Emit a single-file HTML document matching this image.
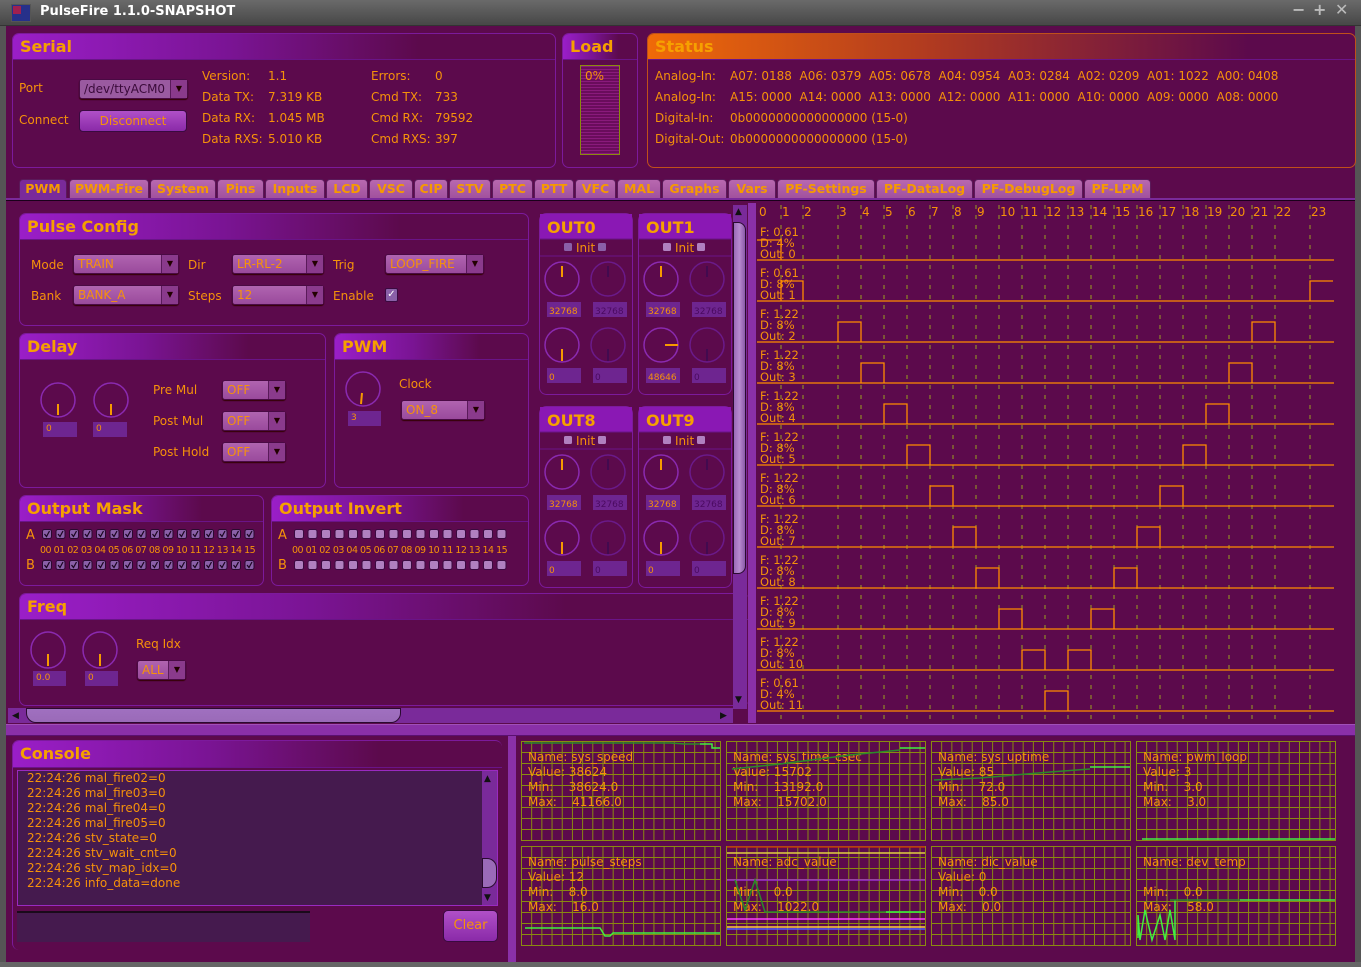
<!DOCTYPE html>
<html><head><meta charset="utf-8"><style>
*{margin:0;padding:0;box-sizing:border-box}
body{width:1361px;height:967px;overflow:hidden;background:#5c0a4c;font-family:"DejaVu Sans","Liberation Sans",sans-serif;color:#f6920a;font-size:12px;position:relative}
.a{position:absolute}
.t{position:absolute;white-space:pre;line-height:14px}
.p{position:absolute;border:1px solid #7c1a9c;border-radius:7px;overflow:hidden}
.h{position:absolute;left:0;right:0;top:0;height:26px;background:linear-gradient(90deg,#9a1ec8 0%,#7a1494 40%,rgba(92,10,76,0) 75%);font-weight:bold;font-size:16px;padding:3px 0 0 7px;color:#f6a000;border-bottom:1px solid #6a1488}
.cb{position:absolute;height:20px;border-radius:3px;background:linear-gradient(#b064b0,#9a4a9c);border:1px solid #4a0a44;color:#f6920a;font-size:12px;padding:2px 0 0 4px;line-height:14px;box-shadow:0 1px 1px #300}
.cb:after{content:"▼";position:absolute;right:0;top:0;width:16px;height:18px;background:#8a3a8c;color:#200;font-size:8px;text-align:center;line-height:18px;border-left:1px solid #5a1a5a}
.vb{position:absolute;height:15px;background:#6e2590;font-size:9px;padding:2px 0 0 3px;line-height:11px}
.tab{position:absolute;top:179px;height:20px;background:linear-gradient(#b868b0,#a0509c);border:1px solid #5a1a5a;border-bottom:none;border-radius:4px 4px 0 0;font-weight:bold;font-size:12.5px;text-align:center;line-height:18px;color:#f69a00}
.g{position:absolute;border:1px solid #8a8a10;background-color:#5c0a4c;background-image:linear-gradient(90deg,#8a8a10 1px,transparent 1px),linear-gradient(#8a8a10 1px,transparent 1px);background-size:10.2px 100%,100% 11px;background-position:-1px 0,0 -1px}
.g .t{color:#f6920a;line-height:15px;font-size:12px}
</style></head><body>
<div class="a" style="left:0;top:0;width:1361px;height:26px;background:linear-gradient(#6a6a6a,#474747);border-bottom:1px solid #333"></div>
<div class="a" style="left:11px;top:4px;width:20px;height:18px;background:#26308a;border:1px solid #555"></div>
<div class="a" style="left:13px;top:6px;width:8px;height:8px;background:#a02050"></div>
<div class="t" style="left:40px;top:5px;color:#fff;font-weight:bold;font-size:13px">PulseFire 1.1.0-SNAPSHOT</div>
<div class="t" style="left:1292px;top:3px;color:#bbb;font-weight:bold;font-size:16px">−</div>
<div class="t" style="left:1313px;top:3px;color:#bbb;font-weight:bold;font-size:16px">+</div>
<div class="t" style="left:1335px;top:3px;color:#bbb;font-weight:bold;font-size:16px">✕</div>
<div class="a" style="left:0;top:26px;width:6px;height:941px;background:#555"></div>
<div class="a" style="left:1355px;top:26px;width:6px;height:941px;background:#555"></div>
<div class="a" style="left:0;top:962px;width:1361px;height:5px;background:#666"></div>

<div class="p" style="left:12px;top:33px;width:544px;height:135px"><div class="h">Serial</div></div>
<div class="t" style="left:19px;top:81px">Port</div>
<div class="cb" style="left:79px;top:79px;width:109px;background:#9a5aa0;color:#3a0a3a">/dev/ttyACM0</div>
<div class="t" style="left:19px;top:113px">Connect</div>
<div class="a" style="left:79px;top:110px;width:108px;height:22px;border-radius:4px;background:linear-gradient(#b050c8,#8a2aa8);border:1px solid #3a0a40;text-align:center;line-height:20px">Disconnect</div>
<div class="t" style="left:202px;top:66px;line-height:21px">Version:
Data TX:
Data RX:
Data RXS:</div>
<div class="t" style="left:268px;top:66px;line-height:21px">1.1
7.319 KB
1.045 MB
5.010 KB</div>
<div class="t" style="left:371px;top:66px;line-height:21px">Errors:
Cmd TX:
Cmd RX:
Cmd RXS:</div>
<div class="t" style="left:435px;top:66px;line-height:21px">0
733
79592
397</div>

<div class="p" style="left:562px;top:33px;width:76px;height:135px"><div class="h">Load</div></div>
<div class="a" style="left:580px;top:65px;width:40px;height:90px;border:1px solid #8a8a10;background:repeating-linear-gradient(#8a1a7c 0 1px,#6a0c5c 1px 3px)"></div>
<div class="t" style="left:585px;top:69px">0%</div>

<div class="p" style="left:647px;top:33px;width:709px;height:135px;border-color:#c0501a"><div class="h" style="background:linear-gradient(90deg,#f06a08 0%,#b03a20 40%,rgba(92,10,76,0) 85%)">Status</div></div>
<div class="t" style="left:655px;top:66px;line-height:21px">Analog-In:
Analog-In:
Digital-In:
Digital-Out:</div>
<div class="t" style="left:730px;top:66px;line-height:21px">A07: 0188  A06: 0379  A05: 0678  A04: 0954  A03: 0284  A02: 0209  A01: 1022  A00: 0408
A15: 0000  A14: 0000  A13: 0000  A12: 0000  A11: 0000  A10: 0000  A09: 0000  A08: 0000
0b0000000000000000 (15-0)
0b0000000000000000 (15-0)</div>

<div class="tab" style="left:19px;width:48px;background:#7a2a9a">PWM</div>
<div class="tab" style="left:69px;width:80px">PWM-Fire</div>
<div class="tab" style="left:150px;width:66px">System</div>
<div class="tab" style="left:217px;width:47px">Pins</div>
<div class="tab" style="left:265px;width:60px">Inputs</div>
<div class="tab" style="left:326px;width:42px">LCD</div>
<div class="tab" style="left:369px;width:44px">VSC</div>
<div class="tab" style="left:414px;width:34px">CIP</div>
<div class="tab" style="left:449px;width:42px">STV</div>
<div class="tab" style="left:492px;width:41px">PTC</div>
<div class="tab" style="left:534px;width:40px">PTT</div>
<div class="tab" style="left:575px;width:41px">VFC</div>
<div class="tab" style="left:617px;width:44px">MAL</div>
<div class="tab" style="left:662px;width:65px">Graphs</div>
<div class="tab" style="left:728px;width:48px">Vars</div>
<div class="tab" style="left:777px;width:98px">PF-Settings</div>
<div class="tab" style="left:876px;width:97px">PF-DataLog</div>
<div class="tab" style="left:974px;width:109px">PF-DebugLog</div>
<div class="tab" style="left:1084px;width:67px">PF-LPM</div>
<div class="a" style="left:6px;top:198px;width:1349px;height:3px;background:#7a2a9a;border-bottom:1px solid #1a001a"></div>

<div class="p" style="left:19px;top:213px;width:510px;height:113px"><div class="h">Pulse Config</div></div>
<div class="t" style="left:31px;top:258px">Mode</div>
<div class="cb" style="left:73px;top:254px;width:106px">TRAIN</div>
<div class="t" style="left:188px;top:258px">Dir</div>
<div class="cb" style="left:232px;top:254px;width:92px">LR-RL-2</div>
<div class="t" style="left:333px;top:258px">Trig</div>
<div class="cb" style="left:385px;top:254px;width:99px">LOOP_FIRE</div>
<div class="t" style="left:31px;top:289px">Bank</div>
<div class="cb" style="left:73px;top:285px;width:106px">BANK_A</div>
<div class="t" style="left:188px;top:289px">Steps</div>
<div class="cb" style="left:232px;top:285px;width:92px">12</div>
<div class="t" style="left:333px;top:289px">Enable</div>
<div class="a" style="left:385px;top:288px;width:13px;height:14px;background:#8a60a8;border:1px solid #3a0a40;border-radius:2px;color:#fff;font-size:10px;line-height:12px;text-align:center">✓</div>

<div class="p" style="left:19px;top:333px;width:307px;height:155px"><div class="h">Delay</div></div>
<svg class="a" style="left:40px;top:382px" width="36" height="36"><circle cx="18" cy="18" r="17" fill="none" stroke="#8a2ab0" stroke-width="1.5"/><line x1="18" y1="22" x2="18" y2="33" stroke="#f69a00" stroke-width="2"/></svg>
<svg class="a" style="left:93px;top:382px" width="36" height="36"><circle cx="18" cy="18" r="17" fill="none" stroke="#8a2ab0" stroke-width="1.5"/><line x1="18" y1="22" x2="18" y2="33" stroke="#f69a00" stroke-width="2"/></svg>
<div class="vb" style="left:43px;top:422px;width:34px">0</div>
<div class="vb" style="left:93px;top:422px;width:34px">0</div>
<div class="t" style="left:153px;top:383px">Pre Mul</div>
<div class="t" style="left:153px;top:414px">Post Mul</div>
<div class="t" style="left:153px;top:445px">Post Hold</div>
<div class="cb" style="left:222px;top:380px;width:64px">OFF</div>
<div class="cb" style="left:222px;top:411px;width:64px">OFF</div>
<div class="cb" style="left:222px;top:442px;width:64px">OFF</div>

<div class="p" style="left:334px;top:333px;width:195px;height:155px"><div class="h">PWM</div></div>
<svg class="a" style="left:345px;top:371px" width="36" height="36"><circle cx="18" cy="18" r="17" fill="none" stroke="#8a2ab0" stroke-width="1.5"/><line x1="17" y1="22" x2="16" y2="33" stroke="#f69a00" stroke-width="2"/></svg>
<div class="vb" style="left:348px;top:411px;width:33px">3</div>
<div class="t" style="left:399px;top:377px">Clock</div>
<div class="cb" style="left:401px;top:400px;width:84px">ON_8</div>

<div class="p" style="left:19px;top:495px;width:245px;height:91px"><div class="h">Output Mask</div></div>
<div class="p" style="left:271px;top:495px;width:258px;height:91px"><div class="h">Output Invert</div></div>
<div class="t" style="left:26px;top:529px;font-size:13px">A</div>
<div class="t" style="left:26px;top:559px;font-size:13px">B</div>
<div class="t" style="left:278px;top:529px;font-size:13px">A</div>
<div class="t" style="left:278px;top:559px;font-size:13px">B</div>
<div class="t" style="left:40px;top:544px;font-size:9.5px;letter-spacing:-0.5px">00 01 02 03 04 05 06 07 08 09 10 11 12 13 14 15</div>
<div class="t" style="left:292px;top:544px;font-size:9.5px;letter-spacing:-0.5px">00 01 02 03 04 05 06 07 08 09 10 11 12 13 14 15</div>
<svg class="a" style="left:40px;top:529px" width="225" height="45">
<defs><g id="c1"><rect x="0.5" y="0.5" width="9" height="9" rx="2" fill="#8a60a8" stroke="#2a0a30"/><path d="M2.5 5 L4.5 7.5 L7.5 2" stroke="#1a0520" fill="none" stroke-width="1.2"/></g></defs>
<use href="#c1" x="2"/><use href="#c1" x="15.5"/><use href="#c1" x="29"/><use href="#c1" x="42.5"/><use href="#c1" x="56"/><use href="#c1" x="69.5"/><use href="#c1" x="83"/><use href="#c1" x="96.5"/><use href="#c1" x="110"/><use href="#c1" x="123.5"/><use href="#c1" x="137"/><use href="#c1" x="150.5"/><use href="#c1" x="164"/><use href="#c1" x="177.5"/><use href="#c1" x="191"/><use href="#c1" x="204.5"/>
<g transform="translate(0,31)"><use href="#c1" x="2"/><use href="#c1" x="15.5"/><use href="#c1" x="29"/><use href="#c1" x="42.5"/><use href="#c1" x="56"/><use href="#c1" x="69.5"/><use href="#c1" x="83"/><use href="#c1" x="96.5"/><use href="#c1" x="110"/><use href="#c1" x="123.5"/><use href="#c1" x="137"/><use href="#c1" x="150.5"/><use href="#c1" x="164"/><use href="#c1" x="177.5"/><use href="#c1" x="191"/><use href="#c1" x="204.5"/></g>
</svg>
<svg class="a" style="left:292px;top:529px" width="225" height="45">
<defs><rect id="c0" x="0.5" y="0.5" width="9" height="9" rx="2" fill="#b080c0" stroke="#3a0a40"/></defs>
<use href="#c0" x="2"/><use href="#c0" x="15.5"/><use href="#c0" x="29"/><use href="#c0" x="42.5"/><use href="#c0" x="56"/><use href="#c0" x="69.5"/><use href="#c0" x="83"/><use href="#c0" x="96.5"/><use href="#c0" x="110"/><use href="#c0" x="123.5"/><use href="#c0" x="137"/><use href="#c0" x="150.5"/><use href="#c0" x="164"/><use href="#c0" x="177.5"/><use href="#c0" x="191"/><use href="#c0" x="204.5"/>
<g transform="translate(0,31)"><use href="#c0" x="2"/><use href="#c0" x="15.5"/><use href="#c0" x="29"/><use href="#c0" x="42.5"/><use href="#c0" x="56"/><use href="#c0" x="69.5"/><use href="#c0" x="83"/><use href="#c0" x="96.5"/><use href="#c0" x="110"/><use href="#c0" x="123.5"/><use href="#c0" x="137"/><use href="#c0" x="150.5"/><use href="#c0" x="164"/><use href="#c0" x="177.5"/><use href="#c0" x="191"/><use href="#c0" x="204.5"/></g>
</svg>

<div class="p" style="left:19px;top:593px;width:730px;height:113px;border-right:none"><div class="h">Freq</div></div>
<svg class="a" style="left:30px;top:631px" width="36" height="38"><ellipse cx="18" cy="19" rx="17" ry="18" fill="none" stroke="#8a2ab0" stroke-width="1.5"/><line x1="18" y1="23" x2="18" y2="35" stroke="#f69a00" stroke-width="2"/></svg>
<svg class="a" style="left:82px;top:631px" width="36" height="38"><ellipse cx="18" cy="19" rx="17" ry="18" fill="none" stroke="#8a2ab0" stroke-width="1.5"/><line x1="18" y1="23" x2="18" y2="35" stroke="#f69a00" stroke-width="2"/></svg>
<div class="vb" style="left:33px;top:671px;width:33px">0.0</div>
<div class="vb" style="left:85px;top:671px;width:33px">0</div>
<div class="t" style="left:136px;top:637px">Req Idx</div>
<div class="cb" style="left:137px;top:660px;width:49px">ALL</div>

<svg class="a" style="left:539px;top:213px" width="195" height="380" font-family="DejaVu Sans, sans-serif">
<defs>
<g id="kn"><circle cx="17" cy="17" r="17" fill="none" stroke="#8a2ab0" stroke-width="1.5"/></g>
<g id="kd"><circle cx="17" cy="17" r="17" fill="none" stroke="#6a1a8a" stroke-width="1.5"/></g>
</defs>
<rect x="0.5" y="0.5" width="93" height="181" rx="7" fill="none" stroke="#7c1a9c"/>
<rect x="1" y="1" width="92" height="25" fill="#8a18b4"/>
<text x="8" y="20" font-size="16" font-weight="bold" fill="#f6a000">OUT0</text>
<line x1="1" y1="26" x2="93" y2="26" stroke="#6a1488"/><line x1="1" y1="43" x2="93" y2="43" stroke="#6a1488"/>
<rect x="25" y="30" width="8" height="8" rx="1.5" fill="#8a60a8"/><text x="37" y="39" font-size="12" fill="#f6920a">Init</text><rect x="59" y="30" width="8" height="8" rx="1.5" fill="#8a60a8"/>
<use href="#kn" x="6" y="49"/><line x1="23" y1="53" x2="23" y2="64" stroke="#f69a00" stroke-width="2"/>
<use href="#kd" x="52" y="49"/><line x1="69" y1="53" x2="69" y2="64" stroke="#3a0a50" stroke-width="1.5"/>
<rect x="8" y="89" width="34" height="15" fill="#6e2590"/><text x="10" y="101" font-size="9" fill="#f6920a">32768</text>
<rect x="54" y="89" width="34" height="15" fill="#6e2590"/><text x="56" y="101" font-size="9" fill="#4a0a60">32768</text>
<use href="#kn" x="6" y="115"/><line x1="23" y1="136" x2="23" y2="148" stroke="#f69a00" stroke-width="2"/>
<use href="#kd" x="52" y="115"/><line x1="69" y1="136" x2="69" y2="148" stroke="#3a0a50" stroke-width="1.5"/>
<rect x="8" y="155" width="34" height="15" fill="#6e2590"/><text x="10" y="167" font-size="9" fill="#f6920a">0</text>
<rect x="54" y="155" width="34" height="15" fill="#6e2590"/><text x="56" y="167" font-size="9" fill="#4a0a60">0</text>
<g transform="translate(99,0)">
<rect x="0.5" y="0.5" width="93" height="181" rx="7" fill="none" stroke="#7c1a9c"/>
<rect x="1" y="1" width="92" height="25" fill="#8a18b4"/>
<text x="8" y="20" font-size="16" font-weight="bold" fill="#f6a000">OUT1</text>
<line x1="1" y1="26" x2="93" y2="26" stroke="#6a1488"/><line x1="1" y1="43" x2="93" y2="43" stroke="#6a1488"/>
<rect x="25" y="30" width="8" height="8" rx="1.5" fill="#b080c0"/><text x="37" y="39" font-size="12" fill="#f6920a">Init</text><rect x="59" y="30" width="8" height="8" rx="1.5" fill="#b080c0"/>
<use href="#kn" x="6" y="49"/><line x1="23" y1="53" x2="23" y2="64" stroke="#f69a00" stroke-width="2"/>
<use href="#kd" x="52" y="49"/><line x1="69" y1="53" x2="69" y2="64" stroke="#3a0a50" stroke-width="1.5"/>
<rect x="8" y="89" width="34" height="15" fill="#6e2590"/><text x="10" y="101" font-size="9" fill="#f6920a">32768</text>
<rect x="54" y="89" width="34" height="15" fill="#6e2590"/><text x="56" y="101" font-size="9" fill="#4a0a60">32768</text>
<use href="#kn" x="6" y="115"/><line x1="27" y1="132" x2="40" y2="132" stroke="#f69a00" stroke-width="2"/>
<use href="#kd" x="52" y="115"/><line x1="69" y1="136" x2="69" y2="148" stroke="#3a0a50" stroke-width="1.5"/>
<rect x="8" y="155" width="34" height="15" fill="#6e2590"/><text x="10" y="167" font-size="9" fill="#f6920a">48646</text>
<rect x="54" y="155" width="34" height="15" fill="#6e2590"/><text x="56" y="167" font-size="9" fill="#4a0a60">0</text>
</g>
<g transform="translate(0,193)">
<rect x="0.5" y="0.5" width="93" height="181" rx="7" fill="none" stroke="#7c1a9c"/>
<rect x="1" y="1" width="92" height="25" fill="#8a18b4"/>
<text x="8" y="20" font-size="16" font-weight="bold" fill="#f6a000">OUT8</text>
<line x1="1" y1="26" x2="93" y2="26" stroke="#6a1488"/><line x1="1" y1="43" x2="93" y2="43" stroke="#6a1488"/>
<rect x="25" y="30" width="8" height="8" rx="1.5" fill="#b080c0"/><text x="37" y="39" font-size="12" fill="#f6920a">Init</text><rect x="59" y="30" width="8" height="8" rx="1.5" fill="#b080c0"/>
<use href="#kn" x="6" y="49"/><line x1="23" y1="53" x2="23" y2="64" stroke="#f69a00" stroke-width="2"/>
<use href="#kd" x="52" y="49"/><line x1="69" y1="53" x2="69" y2="64" stroke="#3a0a50" stroke-width="1.5"/>
<rect x="8" y="89" width="34" height="15" fill="#6e2590"/><text x="10" y="101" font-size="9" fill="#f6920a">32768</text>
<rect x="54" y="89" width="34" height="15" fill="#6e2590"/><text x="56" y="101" font-size="9" fill="#4a0a60">32768</text>
<use href="#kn" x="6" y="115"/><line x1="23" y1="136" x2="23" y2="148" stroke="#f69a00" stroke-width="2"/>
<use href="#kd" x="52" y="115"/><line x1="69" y1="136" x2="69" y2="148" stroke="#3a0a50" stroke-width="1.5"/>
<rect x="8" y="155" width="34" height="15" fill="#6e2590"/><text x="10" y="167" font-size="9" fill="#f6920a">0</text>
<rect x="54" y="155" width="34" height="15" fill="#6e2590"/><text x="56" y="167" font-size="9" fill="#4a0a60">0</text>
</g>
<g transform="translate(99,193)">
<rect x="0.5" y="0.5" width="93" height="181" rx="7" fill="none" stroke="#7c1a9c"/>
<rect x="1" y="1" width="92" height="25" fill="#8a18b4"/>
<text x="8" y="20" font-size="16" font-weight="bold" fill="#f6a000">OUT9</text>
<line x1="1" y1="26" x2="93" y2="26" stroke="#6a1488"/><line x1="1" y1="43" x2="93" y2="43" stroke="#6a1488"/>
<rect x="25" y="30" width="8" height="8" rx="1.5" fill="#b080c0"/><text x="37" y="39" font-size="12" fill="#f6920a">Init</text><rect x="59" y="30" width="8" height="8" rx="1.5" fill="#b080c0"/>
<use href="#kn" x="6" y="49"/><line x1="23" y1="53" x2="23" y2="64" stroke="#f69a00" stroke-width="2"/>
<use href="#kd" x="52" y="49"/><line x1="69" y1="53" x2="69" y2="64" stroke="#3a0a50" stroke-width="1.5"/>
<rect x="8" y="89" width="34" height="15" fill="#6e2590"/><text x="10" y="101" font-size="9" fill="#f6920a">32768</text>
<rect x="54" y="89" width="34" height="15" fill="#6e2590"/><text x="56" y="101" font-size="9" fill="#4a0a60">32768</text>
<use href="#kn" x="6" y="115"/><line x1="23" y1="136" x2="23" y2="148" stroke="#f69a00" stroke-width="2"/>
<use href="#kd" x="52" y="115"/><line x1="69" y1="136" x2="69" y2="148" stroke="#3a0a50" stroke-width="1.5"/>
<rect x="8" y="155" width="34" height="15" fill="#6e2590"/><text x="10" y="167" font-size="9" fill="#f6920a">0</text>
<rect x="54" y="155" width="34" height="15" fill="#6e2590"/><text x="56" y="167" font-size="9" fill="#4a0a60">0</text>
</g>
</svg>

<div class="a" style="left:733px;top:205px;width:14px;height:504px;background:#7a2a9a"></div>
<div class="a" style="left:733px;top:222px;width:13px;height:352px;border-radius:0 8px 8px 0;background:linear-gradient(90deg,#9a6ab8,#b88ad0,#8a5aa8);border:1px solid #2a0a30"></div>
<div class="t" style="left:735px;top:205px;font-size:9px;color:#111">▲</div>
<div class="t" style="left:735px;top:693px;font-size:9px;color:#111">▼</div>
<div class="a" style="left:8px;top:708px;width:725px;height:15px;background:#7a2a9a"></div>
<div class="a" style="left:26px;top:708px;width:375px;height:15px;border-radius:0 0 10px 10px;background:linear-gradient(#a070c0,#9a6ab8);border:1px solid #2a0a30"></div>
<div class="t" style="left:12px;top:709px;font-size:9px;color:#111">◀</div>
<div class="t" style="left:720px;top:709px;font-size:9px;color:#111">▶</div>
<div class="a" style="left:748px;top:203px;width:8px;height:520px;background:#8a30a8"></div>
<div class="t" style="left:39px;top:723px;font-size:7px;color:#111">▲▼</div>
<div class="a" style="left:6px;top:724px;width:1349px;height:12px;background:#8a30a8;border-top:1px solid #a050b8;border-bottom:1px solid #5a1070"></div>

<svg class="a" style="left:756px;top:203px" width="599" height="520" font-family="DejaVu Sans, sans-serif" font-size="12">
<g stroke="#9aa020" stroke-dasharray="4,6" stroke-width="1">
<line x1="25" y1="2" x2="25" y2="520"/><line x1="47" y1="2" x2="47" y2="520"/><line x1="82" y1="2" x2="82" y2="520"/><line x1="105" y1="2" x2="105" y2="520"/><line x1="128" y1="2" x2="128" y2="520"/><line x1="151" y1="2" x2="151" y2="520"/><line x1="174" y1="2" x2="174" y2="520"/><line x1="197" y1="2" x2="197" y2="520"/><line x1="220" y1="2" x2="220" y2="520"/><line x1="243" y1="2" x2="243" y2="520"/><line x1="266" y1="2" x2="266" y2="520"/><line x1="289" y1="2" x2="289" y2="520"/><line x1="312" y1="2" x2="312" y2="520"/><line x1="335" y1="2" x2="335" y2="520"/><line x1="358" y1="2" x2="358" y2="520"/><line x1="381" y1="2" x2="381" y2="520"/><line x1="404" y1="2" x2="404" y2="520"/><line x1="427" y1="2" x2="427" y2="520"/><line x1="450" y1="2" x2="450" y2="520"/><line x1="473" y1="2" x2="473" y2="520"/><line x1="496" y1="2" x2="496" y2="520"/><line x1="519" y1="2" x2="519" y2="520"/><line x1="554" y1="2" x2="554" y2="520"/>
</g>
<g fill="#f6920a">
<text x="3" y="13">0</text><text x="26" y="13">1</text><text x="48" y="13">2</text><text x="83" y="13">3</text><text x="106" y="13">4</text><text x="129" y="13">5</text><text x="152" y="13">6</text><text x="175" y="13">7</text><text x="198" y="13">8</text><text x="221" y="13">9</text><text x="244" y="13">10</text><text x="267" y="13">11</text><text x="290" y="13">12</text><text x="313" y="13">13</text><text x="336" y="13">14</text><text x="359" y="13">15</text><text x="382" y="13">16</text><text x="405" y="13">17</text><text x="428" y="13">18</text><text x="451" y="13">19</text><text x="474" y="13">20</text><text x="497" y="13">21</text><text x="520" y="13">22</text><text x="555" y="13">23</text>
<g font-size="11.5">
<text x="4" y="33">F: 0.61</text><text x="4" y="44">D: 4%</text><text x="4" y="55">Out: 0</text>
<text x="4" y="74">F: 0.61</text><text x="4" y="85">D: 8%</text><text x="4" y="96">Out: 1</text>
<text x="4" y="115">F: 1.22</text><text x="4" y="126">D: 8%</text><text x="4" y="137">Out: 2</text>
<text x="4" y="156">F: 1.22</text><text x="4" y="167">D: 8%</text><text x="4" y="178">Out: 3</text>
<text x="4" y="197">F: 1.22</text><text x="4" y="208">D: 8%</text><text x="4" y="219">Out: 4</text>
<text x="4" y="238">F: 1.22</text><text x="4" y="249">D: 8%</text><text x="4" y="260">Out: 5</text>
<text x="4" y="279">F: 1.22</text><text x="4" y="290">D: 8%</text><text x="4" y="301">Out: 6</text>
<text x="4" y="320">F: 1.22</text><text x="4" y="331">D: 8%</text><text x="4" y="342">Out: 7</text>
<text x="4" y="361">F: 1.22</text><text x="4" y="372">D: 8%</text><text x="4" y="383">Out: 8</text>
<text x="4" y="402">F: 1.22</text><text x="4" y="413">D: 8%</text><text x="4" y="424">Out: 9</text>
<text x="4" y="443">F: 1.22</text><text x="4" y="454">D: 8%</text><text x="4" y="465">Out: 10</text>
<text x="4" y="484">F: 0.61</text><text x="4" y="495">D: 4%</text><text x="4" y="506">Out: 11</text>
</g></g>
<g stroke="#ff8c00" stroke-width="1.3" fill="none">
<path d="M1 57H578"/><path d="M1 98H578"/><path d="M1 139H578"/><path d="M1 180H578"/><path d="M1 221H578"/><path d="M1 262H578"/><path d="M1 303H578"/><path d="M1 344H578"/><path d="M1 385H578"/><path d="M1 426H578"/><path d="M1 467H578"/><path d="M1 508H578"/>
<path d="M1 37H25V57"/>
<path d="M25 98V78H47V98M554 98V78H577"/>
<path d="M82 139V119H105V139M496 139V119H519V139"/>
<path d="M105 180V160H128V180M473 180V160H496V180"/>
<path d="M128 221V201H151V221M450 221V201H473V221"/>
<path d="M151 262V242H174V262M427 262V242H450V262"/>
<path d="M174 303V283H197V303M404 303V283H427V303"/>
<path d="M197 344V324H220V344M381 344V324H404V344"/>
<path d="M220 385V365H243V385M358 385V365H381V385"/>
<path d="M243 426V406H266V426M335 426V406H358V426"/>
<path d="M266 467V447H289V467M312 467V447H335V467"/>
<path d="M289 508V488H312V508"/>
</g>
</svg>

<div class="p" style="left:12px;top:740px;width:490px;height:210px;border-right:none;border-bottom:none"><div class="h" style="height:27px">Console</div></div>
<div class="a" style="left:17px;top:770px;width:481px;height:136px;background:#451a4e;border:1px solid #9a2ac0"></div>
<div class="t" style="left:27px;top:771px;line-height:15px;font-size:12px">22:24:26 mal_fire02=0
22:24:26 mal_fire03=0
22:24:26 mal_fire04=0
22:24:26 mal_fire05=0
22:24:26 stv_state=0
22:24:26 stv_wait_cnt=0
22:24:26 stv_map_idx=0
22:24:26 info_data=done</div>
<div class="a" style="left:482px;top:771px;width:15px;height:134px;background:#7a2a9a"></div>
<div class="a" style="left:482px;top:858px;width:15px;height:30px;border-radius:0 10px 10px 0;background:#9a6ab8;border:1px solid #2a0a30"></div>
<div class="t" style="left:484px;top:772px;font-size:9px;color:#111">▲</div>
<div class="t" style="left:484px;top:891px;font-size:9px;color:#111">▼</div>
<div class="a" style="left:17px;top:911px;width:293px;height:31px;background:#451a4e;border-top:2px solid #1a0a1a"></div>
<div class="a" style="left:443px;top:910px;width:55px;height:32px;border-radius:5px;background:linear-gradient(#b050c8,#8a2aa8);border:1px solid #3a0a40;text-align:center;line-height:30px;font-size:13px">Clear</div>
<div class="a" style="left:508px;top:736px;width:8px;height:226px;background:#8a30a8"></div>

<div class="g" style="left:521px;top:741px;width:200px;height:100px"><div class="t" style="left:6px;top:8px">Name: sys_speed
Value: 38624
Min:    38624.0
Max:    41166.0</div></div>
<div class="g" style="left:726px;top:741px;width:200px;height:100px"><div class="t" style="left:6px;top:8px">Name: sys_time_csec
Value: 15702
Min:    13192.0
Max:    15702.0</div></div>
<div class="g" style="left:931px;top:741px;width:200px;height:100px"><div class="t" style="left:6px;top:8px">Name: sys_uptime
Value: 85
Min:    72.0
Max:    85.0</div></div>
<div class="g" style="left:1136px;top:741px;width:200px;height:100px"><div class="t" style="left:6px;top:8px">Name: pwm_loop
Value: 3
Min:    3.0
Max:    3.0</div></div>
<div class="g" style="left:521px;top:846px;width:200px;height:100px"><div class="t" style="left:6px;top:8px">Name: pulse_steps
Value: 12
Min:    8.0
Max:    16.0</div></div>
<div class="g" style="left:726px;top:846px;width:200px;height:100px"><div class="t" style="left:6px;top:8px">Name: adc_value

Min:    0.0
Max:    1022.0</div></div>
<div class="g" style="left:931px;top:846px;width:200px;height:100px"><div class="t" style="left:6px;top:8px">Name: dic_value
Value: 0
Min:    0.0
Max:    0.0</div></div>
<div class="g" style="left:1136px;top:846px;width:200px;height:100px"><div class="t" style="left:6px;top:8px">Name: dev_temp

Min:    0.0
Max:    58.0</div></div>
<!-- graph traces; svg origin = (520,740) -->
<svg class="a" style="left:520px;top:740px" width="820" height="210" fill="none" stroke-width="1.5">
<path d="M4 3H150L165 4H180" stroke="#2a8a2a"/><path d="M180 4H192V8H200" stroke="#40f040"/>
<path d="M212 29L260 24 330 15 380 10" stroke="#2a8a2a"/><path d="M380 8H405" stroke="#40f040"/>
<path d="M414 40L460 38 530 32 570 29" stroke="#2a8a2a"/><path d="M570 27H610" stroke="#40f040"/>
<path d="M622 99H815" stroke="#40f040"/>
<path d="M5 188H80L85 196H90L93 193H200" stroke="#40f040"/>
<path d="M207 107H405" stroke="#c03010"/><path d="M207 113H405" stroke="#e0d040"/>
<path d="M207 140H405" stroke="#9a30d0"/>
<path d="M215 140L225 170 235 140 245 172H405" stroke="#2a8a2a"/><path d="M366 172H405" stroke="#40f040"/>
<path d="M207 179H405" stroke="#ff40ff"/><path d="M207 187H405" stroke="#ffd040"/><path d="M207 189H405" stroke="#5060ff"/>
<path d="M618 198V175L620 200 625 170 632 200 640 175 645 200 650 170 655 200V160" stroke="#40f040"/><path d="M650 160H720" stroke="#2a8a2a"/><path d="M720 160H815" stroke="#40f040"/>
</svg>
</body></html>
